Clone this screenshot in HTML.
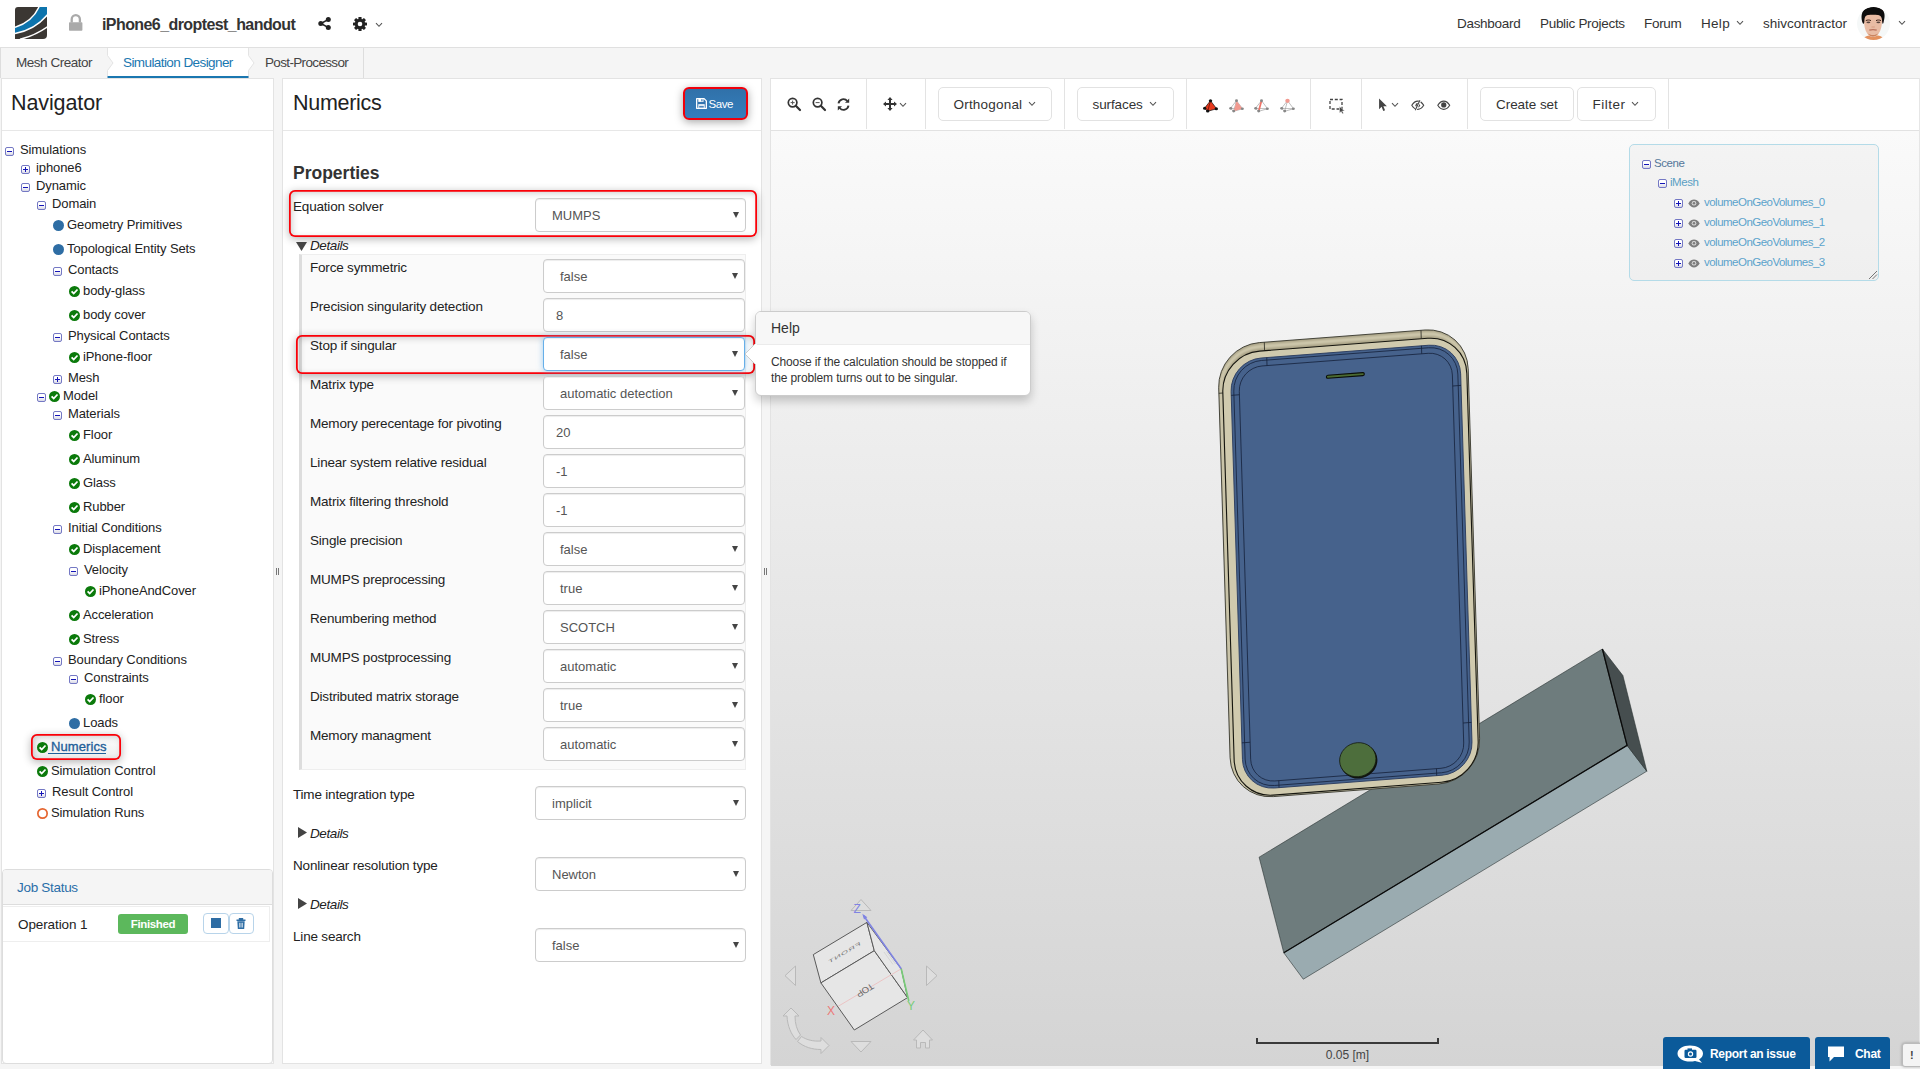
<!DOCTYPE html>
<html lang="en">
<head>
<meta charset="utf-8">
<title>iPhone6_droptest_handout - Simulation Designer</title>
<style>
*{box-sizing:border-box;margin:0;padding:0}
html,body{width:1920px;height:1069px;overflow:hidden}
body{background:#f5f5f5;font-family:"Liberation Sans",Arial,sans-serif;font-size:13.5px;letter-spacing:-0.3px;color:#333;position:relative}
.abs{position:absolute}
.arial{letter-spacing:0}
/* header */
#hdr{position:absolute;left:0;top:0;width:1920px;height:48px;background:#fff;border-bottom:1px solid #e0e0e0}
#hdr .t{position:absolute;top:0;height:47px;line-height:47px;white-space:nowrap;color:#333}
#title{left:102px;font-size:16px;font-weight:bold;color:#222;letter-spacing:-0.58px;top:1px !important}
/* tabs */
#tabs{position:absolute;left:0;top:48px;width:1920px;height:30px;background:#f5f5f5}
#tabs .tab{position:absolute;top:0;height:30px;line-height:30px;font-size:13.5px;letter-spacing:-0.47px;white-space:nowrap;color:#444}
/* panels */
.panel{position:absolute;background:#fff;border:1px solid #e3e3e3}
.ptitle{position:absolute;font-size:21.5px;letter-spacing:-0.3px;color:#222;white-space:nowrap;line-height:24px}
/* tree */
.tr{position:absolute;height:18px;line-height:18px;white-space:nowrap;color:#222;font-size:13px;letter-spacing:-0.1px}
.exp{position:absolute;width:9px;height:9px;border:1px solid #7478c4;border-radius:2px;background:linear-gradient(#fff 40%,#d9d9e6)}
.exp:before{content:"";position:absolute;left:1px;top:3px;width:5px;height:1px;background:#1414b8}
.exp.plus:after{content:"";position:absolute;left:3px;top:1px;width:1px;height:5px;background:#1414b8}
.dot{position:absolute;width:11px;height:11px;border-radius:50%;background:#2e6da4}
.ring{position:absolute;width:11px;height:11px;border-radius:50%;border:1.7px solid #e5652f;background:#fff}
.chk{position:absolute;width:11px;height:11px}
/* form */
.lbl{position:absolute;white-space:nowrap;height:18px;line-height:18px;color:#222;letter-spacing:-0.19px}
.sel,.inp{position:absolute;height:34px;border:1px solid #ccc;border-radius:4px;background:#fff;box-shadow:inset 0 1px 1px rgba(0,0,0,.075);font-size:13px;letter-spacing:0;color:#555;line-height:33px;white-space:nowrap}
.sel{padding-left:16px}
.inp{padding-left:12px}
.sel:after{content:"";position:absolute;right:6px;top:13px;border-left:3.5px solid transparent;border-right:3.5px solid transparent;border-top:6px solid #444}
.redbox{position:absolute;border-radius:6px;box-shadow:inset 0 0 0 1.75px #fb0008,inset 2px 2px 7px 1px rgba(0,0,0,.2),0 2px 8px rgba(0,0,0,.3)}
.det{position:absolute;font-style:italic;white-space:nowrap;height:18px;line-height:18px;color:#222;letter-spacing:-0.4px}
/* toolbar */
.vsep{position:absolute;top:79px;width:1px;height:50px;background:#e3e3e3}
.tbtn{position:absolute;top:87px;height:34px;border:1px solid #e2e2e2;border-radius:5px;background:#fff;line-height:33px;white-space:nowrap;color:#333;letter-spacing:-0.1px;font-size:13.5px}
.chev{display:inline-block;width:6px;height:6px;border-right:1.3px solid #555;border-bottom:1.3px solid #555;transform:rotate(45deg) scale(.8)}
svg{position:absolute;overflow:visible}
</style>
</head>
<body>
<!-- ===== header ===== -->
<div id="hdr">
 <svg style="left:15px;top:7px" width="32" height="32" viewBox="0 0 32 32">
  <defs><clipPath id="lgc"><path d="M3 0H32V28a4 4 0 0 1-4 4H0V3A3 3 0 0 1 3 0Z"/></clipPath></defs>
  <g clip-path="url(#lgc)">
   <rect width="32" height="32" fill="#3b3733"/>
   <path d="M0 20.400C9 17.500 19 11 24 0H33V7.300C24 18 12 24.500 0 26.500Z" fill="#0d74ad"/>
   <path d="M0 20.400C9 17.500 19 11 24 0" fill="none" stroke="#fff" stroke-width="1.500"/>
   <path d="M0 26.500C12 24.500 24 18 32.500 7.800" fill="none" stroke="#fff" stroke-width="1.600"/>
   <path d="M5 32.300C16 29.500 25 25 32.500 19.700" fill="none" stroke="#fff" stroke-width="1.500"/>
  </g>
 </svg>
 <svg style="left:68px;top:13px" width="16" height="18" viewBox="0 0 16 18">
  <path d="M3.700 9.500V6.200a4.100 4.100 0 0 1 8.200 0V9.500" fill="none" stroke="#aaa" stroke-width="2.300"/>
  <rect x="1" y="9.200" width="13.400" height="8.600" rx=".8" fill="#aaa"/>
 </svg>
 <div class="t" id="title">iPhone6_droptest_handout</div>
 <svg style="left:318px;top:17px" width="13" height="13" viewBox="0 0 13 13">
  <path d="M3 6.5L10 2.6M3 6.5L10 10.4" stroke="#222" stroke-width="1.5" fill="none"/>
  <circle cx="2.8" cy="6.5" r="2.5" fill="#222"/><circle cx="10.3" cy="2.6" r="2.5" fill="#222"/><circle cx="10.3" cy="10.4" r="2.5" fill="#222"/>
 </svg>
 <svg style="left:353px;top:17px" width="14" height="14" viewBox="-7 -7 14 14">
  <g fill="#222">
   <rect x="-1.6" y="-7" width="3.2" height="14" rx=".6"/>
   <rect x="-1.6" y="-7" width="3.2" height="14" rx=".6" transform="rotate(45)"/>
   <rect x="-1.6" y="-7" width="3.2" height="14" rx=".6" transform="rotate(90)"/>
   <rect x="-1.6" y="-7" width="3.2" height="14" rx=".6" transform="rotate(135)"/>
   <circle r="5.2"/>
  </g>
  <circle r="2.3" fill="#fff"/>
 </svg>
 <svg style="left:375px;top:22px" width="8" height="6" viewBox="0 0 8 6"><path d="M1 1.2L4 4.3L7 1.2" fill="none" stroke="#555" stroke-width="1.1"/></svg>

 <div class="t" style="left:1457px">Dashboard</div>
 <div class="t" style="left:1540px">Public Projects</div>
 <div class="t" style="left:1644px">Forum</div>
 <div class="t" style="left:1701px;letter-spacing:.3px">Help</div>
 <svg style="left:1736px;top:20px" width="8" height="6" viewBox="0 0 8 6"><path d="M1 1.2L4 4.3L7 1.2" fill="none" stroke="#555" stroke-width="1.1"/></svg>
 <div class="t" style="left:1763px;letter-spacing:0">shivcontractor</div>
 <svg style="left:1857px;top:7px" width="33" height="33" viewBox="0 0 33 33">
  <defs><clipPath id="avc"><circle cx="16.500" cy="16.500" r="16.500"/></clipPath><filter id="avb" x="-10%" y="-10%" width="120%" height="120%"><feGaussianBlur stdDeviation=".45"/></filter></defs>
  <g clip-path="url(#avc)">
   <rect width="33" height="33" fill="#f5f8f8"/>
   <g filter="url(#avb)">
    <path d="M5 34C6 30 9.500 29 12 28.500H21C24 29 26.500 30 27 34Z" fill="#e4925f"/>
    <path d="M7 13C7 9 10 6.500 16 6.500S25 9 25 13C25 21 23 25 21 27.500C19.500 29.500 18 30 16 30S12.500 29.500 11 27.500C9 25 7 21 7 13Z" fill="#e9bca4"/>
    <path d="M10.500 26C12 28.500 14 29.500 16 29.500S20 28.500 21.500 26C20 27.500 18 28 16 28S12 27.500 10.500 26Z" fill="#c8835e"/>
    <path d="M5.500 15.500C3.500 9 4 0 16 0S29 7 26.500 15.500C26 17 25.500 17.500 25.200 15C25 10.500 24 8.500 21 8C18 7.500 14 7.500 11 8C8 8.500 7.500 10.500 7.300 15C7 17.500 6 17 5.500 15.500Z" fill="#0b0808"/>
    <path d="M8.800 13.600C10.500 12.800 12.500 12.800 14 13.600M19 13.600C20.500 12.800 22.500 12.800 24 13.600" stroke="#3a2018" stroke-width="1" fill="none"/>
    <ellipse cx="11.400" cy="15.300" rx="2" ry=".9" fill="#5a4640"/><ellipse cx="21.400" cy="15.300" rx="2" ry=".9" fill="#5a4640"/>
    <path d="M12.300 23.200C14.500 22.500 17.500 22.500 19.700 23.200" stroke="#b8705a" stroke-width="1.300" fill="none"/>
    <path d="M14.500 20H17.800" stroke="#d59a80" stroke-width=".9"/>
   </g>
  </g>
 </svg>
 <svg style="left:1898px;top:20px" width="8" height="6" viewBox="0 0 8 6"><path d="M1 1.2L4 4.3L7 1.2" fill="none" stroke="#555" stroke-width="1.1"/></svg>
</div>

<!-- ===== tabs ===== -->
<div id="tabs">
 <div class="abs" style="left:0;top:0;width:1px;height:30px;background:#ddd"></div>
 <div class="abs" style="left:107px;top:0;width:141px;height:30px;background:#fff;border-bottom:2px solid #1a77b0"></div>
 <svg style="left:106px;top:0" width="10" height="30" viewBox="0 0 10 30"><path d="M0 0H1.500V7.500L7 15L1.500 22.500V30H0Z" fill="#f5f5f5"/><path d="M1.500 0V7.500L7 15L1.500 22.500V28" fill="none" stroke="#e4e4e4" stroke-width="1"/></svg>
 <svg style="left:247px;top:0" width="10" height="30" viewBox="0 0 10 30"><path d="M0 0H1.500V7.500L7 15L1.500 22.500V28H0Z" fill="#fff"/><path d="M1.500 0V7.500L7 15L1.500 22.500V30" fill="none" stroke="#e4e4e4" stroke-width="1"/><rect x="0" y="28" width="1.500" height="2" fill="#1a77b0"/></svg>
 <div class="tab" style="left:16px">Mesh Creator</div>
 <div class="tab" style="left:123px;color:#1a77b0;letter-spacing:-0.58px">Simulation Designer</div>
 <div class="tab" style="left:265px;letter-spacing:-0.65px">Post-Processor</div>
 <div class="abs" style="left:363px;top:0;width:1px;height:30px;background:#ddd"></div>
</div>
<!-- ===== navigator panel ===== -->
<div class="panel" style="left:1px;top:78px;width:273px;height:986px"></div>
<div class="abs" style="left:2px;top:130px;width:271px;height:1px;background:#e7e7e7"></div>
<div class="ptitle" style="left:11px;top:91px;letter-spacing:-0.1px">Navigator</div>
<div class="redbox" style="left:31px;top:734px;width:90px;height:26px;border-radius:6px;background:linear-gradient(#fff,#ececec)"></div>
<div class="exp" style="left:5px;top:147px"></div>
<div class="tr" style="left:20px;top:141px">Simulations</div>
<div class="exp plus" style="left:21px;top:165px"></div>
<div class="tr" style="left:36px;top:159px">iphone6</div>
<div class="exp" style="left:21px;top:183px"></div>
<div class="tr" style="left:36px;top:177px">Dynamic</div>
<div class="exp" style="left:37px;top:201px"></div>
<div class="tr" style="left:52px;top:195px">Domain</div>
<div class="dot" style="left:53px;top:220px"></div>
<div class="tr" style="left:67px;top:216px">Geometry Primitives</div>
<div class="dot" style="left:53px;top:244px"></div>
<div class="tr" style="left:67px;top:240px">Topological Entity Sets</div>
<div class="exp" style="left:53px;top:267px"></div>
<div class="tr" style="left:68px;top:261px">Contacts</div>
<svg class="chk" style="left:69px;top:286px" width="11" height="11" viewBox="0 0 11 11"><circle cx="5.5" cy="5.5" r="5.5" fill="#0b7a0b"/><path d="M2.6 5.400L4.700 7.500L8.500 3.500" fill="none" stroke="#fff" stroke-width="1.800"/></svg>
<div class="tr" style="left:83px;top:282px">body-glass</div>
<svg class="chk" style="left:69px;top:310px" width="11" height="11" viewBox="0 0 11 11"><circle cx="5.5" cy="5.5" r="5.5" fill="#0b7a0b"/><path d="M2.6 5.400L4.700 7.500L8.500 3.500" fill="none" stroke="#fff" stroke-width="1.800"/></svg>
<div class="tr" style="left:83px;top:306px">body cover</div>
<div class="exp" style="left:53px;top:333px"></div>
<div class="tr" style="left:68px;top:327px">Physical Contacts</div>
<svg class="chk" style="left:69px;top:352px" width="11" height="11" viewBox="0 0 11 11"><circle cx="5.5" cy="5.5" r="5.5" fill="#0b7a0b"/><path d="M2.6 5.400L4.700 7.500L8.500 3.500" fill="none" stroke="#fff" stroke-width="1.800"/></svg>
<div class="tr" style="left:83px;top:348px">iPhone-floor</div>
<div class="exp plus" style="left:53px;top:375px"></div>
<div class="tr" style="left:68px;top:369px">Mesh</div>
<div class="exp" style="left:37px;top:393px"></div>
<svg class="chk" style="left:49px;top:391px" width="11" height="11" viewBox="0 0 11 11"><circle cx="5.5" cy="5.5" r="5.5" fill="#0b7a0b"/><path d="M2.6 5.400L4.700 7.500L8.500 3.500" fill="none" stroke="#fff" stroke-width="1.800"/></svg>
<div class="tr" style="left:63px;top:387px">Model</div>
<div class="exp" style="left:53px;top:411px"></div>
<div class="tr" style="left:68px;top:405px">Materials</div>
<svg class="chk" style="left:69px;top:430px" width="11" height="11" viewBox="0 0 11 11"><circle cx="5.5" cy="5.5" r="5.5" fill="#0b7a0b"/><path d="M2.6 5.400L4.700 7.500L8.500 3.500" fill="none" stroke="#fff" stroke-width="1.800"/></svg>
<div class="tr" style="left:83px;top:426px">Floor</div>
<svg class="chk" style="left:69px;top:454px" width="11" height="11" viewBox="0 0 11 11"><circle cx="5.5" cy="5.5" r="5.5" fill="#0b7a0b"/><path d="M2.6 5.400L4.700 7.500L8.500 3.500" fill="none" stroke="#fff" stroke-width="1.800"/></svg>
<div class="tr" style="left:83px;top:450px">Aluminum</div>
<svg class="chk" style="left:69px;top:478px" width="11" height="11" viewBox="0 0 11 11"><circle cx="5.5" cy="5.5" r="5.5" fill="#0b7a0b"/><path d="M2.6 5.400L4.700 7.500L8.500 3.500" fill="none" stroke="#fff" stroke-width="1.800"/></svg>
<div class="tr" style="left:83px;top:474px">Glass</div>
<svg class="chk" style="left:69px;top:502px" width="11" height="11" viewBox="0 0 11 11"><circle cx="5.5" cy="5.5" r="5.5" fill="#0b7a0b"/><path d="M2.6 5.400L4.700 7.500L8.500 3.500" fill="none" stroke="#fff" stroke-width="1.800"/></svg>
<div class="tr" style="left:83px;top:498px">Rubber</div>
<div class="exp" style="left:53px;top:525px"></div>
<div class="tr" style="left:68px;top:519px">Initial Conditions</div>
<svg class="chk" style="left:69px;top:544px" width="11" height="11" viewBox="0 0 11 11"><circle cx="5.5" cy="5.5" r="5.5" fill="#0b7a0b"/><path d="M2.6 5.400L4.700 7.500L8.500 3.500" fill="none" stroke="#fff" stroke-width="1.800"/></svg>
<div class="tr" style="left:83px;top:540px">Displacement</div>
<div class="exp" style="left:69px;top:567px"></div>
<div class="tr" style="left:84px;top:561px">Velocity</div>
<svg class="chk" style="left:85px;top:586px" width="11" height="11" viewBox="0 0 11 11"><circle cx="5.5" cy="5.5" r="5.5" fill="#0b7a0b"/><path d="M2.6 5.400L4.700 7.500L8.500 3.500" fill="none" stroke="#fff" stroke-width="1.800"/></svg>
<div class="tr" style="left:99px;top:582px">iPhoneAndCover</div>
<svg class="chk" style="left:69px;top:610px" width="11" height="11" viewBox="0 0 11 11"><circle cx="5.5" cy="5.5" r="5.5" fill="#0b7a0b"/><path d="M2.6 5.400L4.700 7.500L8.500 3.500" fill="none" stroke="#fff" stroke-width="1.800"/></svg>
<div class="tr" style="left:83px;top:606px">Acceleration</div>
<svg class="chk" style="left:69px;top:634px" width="11" height="11" viewBox="0 0 11 11"><circle cx="5.5" cy="5.5" r="5.5" fill="#0b7a0b"/><path d="M2.6 5.400L4.700 7.500L8.500 3.500" fill="none" stroke="#fff" stroke-width="1.800"/></svg>
<div class="tr" style="left:83px;top:630px">Stress</div>
<div class="exp" style="left:53px;top:657px"></div>
<div class="tr" style="left:68px;top:651px">Boundary Conditions</div>
<div class="exp" style="left:69px;top:675px"></div>
<div class="tr" style="left:84px;top:669px">Constraints</div>
<svg class="chk" style="left:85px;top:694px" width="11" height="11" viewBox="0 0 11 11"><circle cx="5.5" cy="5.5" r="5.5" fill="#0b7a0b"/><path d="M2.6 5.400L4.700 7.500L8.500 3.500" fill="none" stroke="#fff" stroke-width="1.800"/></svg>
<div class="tr" style="left:99px;top:690px">floor</div>
<div class="dot" style="left:69px;top:718px"></div>
<div class="tr" style="left:83px;top:714px">Loads</div>
<svg class="chk" style="left:37px;top:742px" width="11" height="11" viewBox="0 0 11 11"><circle cx="5.5" cy="5.5" r="5.5" fill="#0b7a0b"/><path d="M2.6 5.400L4.700 7.500L8.500 3.500" fill="none" stroke="#fff" stroke-width="1.800"/></svg>
<div class="abs" style="left:48px;top:753px;width:58px;height:1px;background:#1f5f99"></div>
<div class="tr" style="left:51px;top:738px;color:#1f5f99;-webkit-text-stroke:.35px #1f5f99;letter-spacing:.1px">Numerics</div>
<svg class="chk" style="left:37px;top:766px" width="11" height="11" viewBox="0 0 11 11"><circle cx="5.5" cy="5.5" r="5.5" fill="#0b7a0b"/><path d="M2.6 5.400L4.700 7.500L8.500 3.500" fill="none" stroke="#fff" stroke-width="1.800"/></svg>
<div class="tr" style="left:51px;top:762px">Simulation Control</div>
<div class="exp plus" style="left:37px;top:789px"></div>
<div class="tr" style="left:52px;top:783px">Result Control</div>
<svg style="left:37px;top:808px" width="11" height="11" viewBox="0 0 11 11"><circle cx="5.500" cy="5.500" r="4.650" fill="#fff" stroke="#e5652f" stroke-width="1.700"/></svg>
<div class="tr" style="left:51px;top:804px">Simulation Runs</div>
<div class="abs" style="left:276px;top:568px;width:1px;height:7px;background:#777"></div><div class="abs" style="left:278px;top:568px;width:1px;height:7px;background:#777"></div>
<div class="abs" style="left:764px;top:568px;width:1px;height:7px;background:#777"></div><div class="abs" style="left:766px;top:568px;width:1px;height:7px;background:#777"></div>
<!-- job status -->
<div class="abs" style="left:2px;top:869px;width:271px;height:195px;border:1px solid #ddd;border-radius:4px;background:#fff"></div>
<div class="abs" style="left:3px;top:870px;width:269px;height:35px;background:#f5f5f5;border-bottom:1px solid #ddd;border-radius:3px 3px 0 0"></div>
<div class="abs" style="left:17px;top:879px;height:18px;line-height:18px;color:#2a6ea8;white-space:nowrap">Job Status</div>
<div class="abs" style="left:3px;top:906px;width:267px;height:36px;border:1px solid #eee;border-left:0"></div>
<div class="abs" style="left:18px;top:916px;height:18px;line-height:18px;white-space:nowrap;color:#222;letter-spacing:-0.1px">Operation 1</div>
<div class="abs" style="left:118px;top:914px;width:70px;height:20px;border-radius:3px;background:#5cb85c;color:#fff;font-weight:bold;font-size:11.500px;letter-spacing:-0.35px;line-height:21px;text-align:center">Finished</div>
<div class="abs" style="left:203px;top:913px;width:26px;height:21px;border:1px solid #b8d4ea;border-radius:4px;background:#fff"></div>
<div class="abs" style="left:229px;top:913px;width:25px;height:21px;border:1px solid #b8d4ea;border-radius:4px;background:#fff"></div>
<div class="abs" style="left:211px;top:918px;width:10px;height:10px;background:#2e6da4"></div>
<svg style="left:236px;top:918px" width="10" height="11" viewBox="0 0 10 11"><path d="M0.500 2.200H9.500M3.500 2V0.700H6.500V2" stroke="#2e6da4" stroke-width="1.400" fill="none"/><path d="M1.300 3.300H8.700L8.200 11H1.800Z" fill="#2e6da4"/><path d="M3.600 4.800V9.500M5 4.800V9.500M6.400 4.800V9.500" stroke="#fff" stroke-width=".7"/></svg>

<!-- ===== center (Numerics) panel ===== -->
<div class="panel" style="left:282px;top:78px;width:480px;height:986px"></div>
<div class="abs" style="left:283px;top:130px;width:478px;height:1px;background:#e7e7e7"></div>
<div class="ptitle" style="left:293px;top:91px">Numerics</div>
<div class="abs" style="left:683px;top:87px;width:65px;height:33px;border:2px solid #f0000c;border-radius:6px;background:linear-gradient(#3071a9,#357ebd);box-shadow:0 2px 9px rgba(0,0,0,.35)"></div>
<svg style="left:696px;top:98px" width="11" height="11" viewBox="0 0 11 11"><path d="M.65 .65H8.100L10.350 2.900V10.350H.65Z" fill="#3174b0" stroke="#fff" stroke-width="1.300" stroke-linejoin="round"/><rect x="2.300" y=".8" width="5.200" height="3.100" fill="#fff"/><rect x="5.300" y="1.200" width="1.200" height="2.100" fill="#3174b0"/><rect x="2.300" y="6.200" width="6.400" height="4" fill="#fff"/><rect x="3.200" y="7.800" width="4.600" height="1.800" fill="#4a86bd"/></svg>
<div class="abs" style="left:708.500px;top:95px;height:18px;line-height:18px;color:#fff;font-size:11.500px;letter-spacing:-0.4px;white-space:nowrap">Save</div>
<div class="abs" style="left:293px;top:161px;height:24px;line-height:24px;font-size:17.500px;font-weight:bold;letter-spacing:0;color:#333;white-space:nowrap">Properties</div>
<div class="redbox" style="left:289px;top:190px;width:468px;height:47px"></div>
<div class="lbl" style="left:293px;top:198px">Equation solver</div>
<div class="sel" style="left:535px;top:198px;width:211px">MUMPS</div>
<svg style="left:296px;top:241.5px" width="11" height="9" viewBox="0 0 11 9"><path d="M0 0H11L5.500 9Z" fill="#444"/></svg>
<div class="det" style="left:310px;top:237px">Details</div>
<div class="abs" style="left:299px;top:254px;width:447px;height:516px;background:#fafafa;border:1px solid #eee;border-left:3px solid #ddd"></div>
<div class="lbl" style="left:310px;top:259px">Force symmetric</div>
<div class="sel" style="left:543px;top:259px;width:202px">false</div>
<div class="lbl" style="left:310px;top:298px">Precision singularity detection</div>
<div class="inp" style="left:543px;top:298px;width:202px">8</div>
<div class="redbox" style="left:296px;top:335px;width:459px;height:39px"></div>
<div class="lbl" style="left:310px;top:337px">Stop if singular</div>
<div class="sel" style="left:543px;top:337px;width:202px;border-color:#66afe9;box-shadow:inset 0 1px 1px rgba(0,0,0,.075),0 0 6px rgba(102,175,233,.6)">false</div>
<div class="lbl" style="left:310px;top:376px">Matrix type</div>
<div class="sel" style="left:543px;top:376px;width:202px">automatic detection</div>
<div class="lbl" style="left:310px;top:415px">Memory perecentage for pivoting</div>
<div class="inp" style="left:543px;top:415px;width:202px">20</div>
<div class="lbl" style="left:310px;top:454px">Linear system relative residual</div>
<div class="inp" style="left:543px;top:454px;width:202px">-1</div>
<div class="lbl" style="left:310px;top:493px">Matrix filtering threshold</div>
<div class="inp" style="left:543px;top:493px;width:202px">-1</div>
<div class="lbl" style="left:310px;top:532px">Single precision</div>
<div class="sel" style="left:543px;top:532px;width:202px">false</div>
<div class="lbl" style="left:310px;top:571px">MUMPS preprocessing</div>
<div class="sel" style="left:543px;top:571px;width:202px">true</div>
<div class="lbl" style="left:310px;top:610px">Renumbering method</div>
<div class="sel" style="left:543px;top:610px;width:202px">SCOTCH</div>
<div class="lbl" style="left:310px;top:649px">MUMPS postprocessing</div>
<div class="sel" style="left:543px;top:649px;width:202px">automatic</div>
<div class="lbl" style="left:310px;top:688px">Distributed matrix storage</div>
<div class="sel" style="left:543px;top:688px;width:202px">true</div>
<div class="lbl" style="left:310px;top:727px">Memory managment</div>
<div class="sel" style="left:543px;top:727px;width:202px">automatic</div>
<div class="lbl" style="left:293px;top:786px">Time integration type</div>
<div class="sel" style="left:535px;top:786px;width:211px">implicit</div>
<svg style="left:298px;top:827px" width="9" height="11" viewBox="0 0 9 11"><path d="M0 0V11L9 5.500Z" fill="#444"/></svg>
<div class="det" style="left:310px;top:825px">Details</div>
<div class="lbl" style="left:293px;top:857px">Nonlinear resolution type</div>
<div class="sel" style="left:535px;top:857px;width:211px">Newton</div>
<svg style="left:298px;top:898px" width="9" height="11" viewBox="0 0 9 11"><path d="M0 0V11L9 5.500Z" fill="#444"/></svg>
<div class="det" style="left:310px;top:896px">Details</div>
<div class="lbl" style="left:293px;top:928px">Line search</div>
<div class="sel" style="left:535px;top:928px;width:211px">false</div>
<!-- ===== viewer panel ===== -->
<div class="abs" style="left:770px;top:78px;width:1150px;height:987px;background:#fff;border:1px solid #e3e3e3;border-right:0;border-bottom:0"></div>
<div id="canvas" class="abs" style="left:771px;top:131px;width:1149px;height:934.500px;background:linear-gradient(#fafafa,#d4d4d4)"></div>
<div class="abs" style="left:771px;top:130px;width:1149px;height:1px;background:#e2e2e2"></div>
<div class="abs" style="left:1919px;top:78px;width:1px;height:988px;background:#e6e6e6"></div>
<!-- toolbar -->
<div class="vsep" style="left:866px"></div><div class="vsep" style="left:925px"></div><div class="vsep" style="left:1064px"></div><div class="vsep" style="left:1186px"></div>
<div class="vsep" style="left:1310px"></div><div class="vsep" style="left:1361px"></div><div class="vsep" style="left:1467px"></div><div class="vsep" style="left:1668px"></div>
<!-- zoom in / out / refresh -->
<svg style="left:787px;top:97px" width="14" height="14" viewBox="0 0 14 14"><circle cx="5.600" cy="5.600" r="4.300" fill="none" stroke="#333" stroke-width="1.700"/><path d="M8.800 8.800L13 13" stroke="#333" stroke-width="2.200" stroke-linecap="round"/><path d="M3.600 5.600H7.600M5.600 3.600V7.600" stroke="#555" stroke-width="1"/></svg>
<svg style="left:812px;top:97px" width="14" height="14" viewBox="0 0 14 14"><circle cx="5.600" cy="5.600" r="4.300" fill="none" stroke="#333" stroke-width="1.700"/><path d="M8.800 8.800L13 13" stroke="#333" stroke-width="2.200" stroke-linecap="round"/><path d="M3.600 5.600H7.600" stroke="#555" stroke-width="1"/></svg>
<svg style="left:837px;top:98px" width="13" height="13" viewBox="0 0 13 13"><path d="M1.500 5.300A5 5 0 0 1 10.300 3" fill="none" stroke="#333" stroke-width="1.900"/><path d="M12.200 .6V4.800H8Z" fill="#333"/><path d="M11.500 7.700A5 5 0 0 1 2.700 10" fill="none" stroke="#333" stroke-width="1.900"/><path d="M.8 12.400V8.200H5Z" fill="#333"/></svg>
<!-- move -->
<svg style="left:883px;top:97px" width="14" height="14" viewBox="0 0 14 14"><path d="M7 0L9.600 3H8V6H11V4.400L14 7L11 9.600V8H8V11H9.600L7 14L4.400 11H6V8H3V9.600L0 7L3 4.400V6H6V3H4.400Z" fill="#333"/></svg>
<svg style="left:899px;top:102px" width="8" height="6" viewBox="0 0 8 6"><path d="M1 1.200L4 4.300L7 1.200" fill="none" stroke="#555" stroke-width="1.100"/></svg>
<div class="tbtn" style="left:938px;width:114px;padding-left:14.500px;letter-spacing:.2px">Orthogonal</div>
<svg style="left:1028px;top:101px" width="8" height="6" viewBox="0 0 8 6"><path d="M1 1.200L4 4.300L7 1.200" fill="none" stroke="#555" stroke-width="1.100"/></svg>
<div class="tbtn" style="left:1077px;width:97px;padding-left:14.500px;letter-spacing:-0.1px">surfaces</div>
<svg style="left:1149px;top:101px" width="8" height="6" viewBox="0 0 8 6"><path d="M1 1.200L4 4.300L7 1.200" fill="none" stroke="#555" stroke-width="1.100"/></svg>
<!-- tetra icons -->
<svg style="left:1202.5px;top:98.500px" width="15" height="14" viewBox="0 0 16 16.500" preserveAspectRatio="none"><path d="M8 2L1.500 11L5 14.500L14.500 11.500Z" fill="#e83a1e" stroke="#111" stroke-width=".8"/><path d="M8 2L5 14.500" stroke="#7a1408" stroke-width="1"/><circle cx="8" cy="2" r="1.800" fill="#111"/><circle cx="1.800" cy="11" r="1.800" fill="#111"/><circle cx="5" cy="14.200" r="1.800" fill="#111"/><circle cx="14.200" cy="11.500" r="1.800" fill="#111"/></svg>
<svg style="left:1228.5px;top:98.500px" width="15" height="14" viewBox="0 0 16 16.500" preserveAspectRatio="none"><path d="M8 2L1.500 11L5 14.500L14.500 11.500ZM1.500 11L14.500 11.500M8 2L5 14.500" fill="none" stroke="#999" stroke-width=".7"/><path d="M8 2L5 14.500L14.500 11.500Z" fill="#f29a90"/><circle cx="8" cy="2" r="1.600" fill="#888"/><circle cx="1.800" cy="11" r="1.600" fill="#888"/><circle cx="5" cy="14.200" r="1.600" fill="#888"/><circle cx="14.200" cy="11.500" r="1.600" fill="#888"/></svg>
<svg style="left:1253.5px;top:98.500px" width="15" height="14" viewBox="0 0 16 16.500" preserveAspectRatio="none"><path d="M8 2L1.500 11L5 14.500L14.500 11.500ZM1.500 11L14.500 11.500" fill="none" stroke="#999" stroke-width=".7"/><path d="M8 2L5 14.500" stroke="#ee7468" stroke-width="1.800"/><circle cx="8" cy="2" r="1.600" fill="#888"/><circle cx="1.800" cy="11" r="1.600" fill="#888"/><circle cx="5" cy="14.200" r="1.600" fill="#888"/><circle cx="14.200" cy="11.500" r="1.600" fill="#888"/></svg>
<svg style="left:1279.5px;top:98.500px" width="15" height="14" viewBox="0 0 16 16.500" preserveAspectRatio="none"><path d="M8 2L1.500 11L5 14.500L14.500 11.500ZM1.500 11L14.500 11.500M8 2L5 14.500" fill="none" stroke="#999" stroke-width=".7"/><circle cx="8" cy="2.200" r="2.400" fill="#f29a90"/><circle cx="1.800" cy="11" r="1.600" fill="#888"/><circle cx="5" cy="14.200" r="1.600" fill="#888"/><circle cx="14.200" cy="11.500" r="1.600" fill="#888"/></svg>
<!-- box select -->
<svg style="left:1328.500px;top:97.500px" width="17" height="16" viewBox="0 0 17 16"><rect x="1" y="1.500" width="12" height="9.500" fill="none" stroke="#444" stroke-width="1.300" stroke-dasharray="3 1.800"/><path d="M10.500 8.500V15L12.200 13.400L13.300 15.800L14.500 15.200L13.400 12.900H15.600Z" fill="#444" stroke="#fff" stroke-width=".4"/></svg>
<!-- cursor, eyes -->
<svg style="left:1378px;top:97.500px" width="10" height="14" viewBox="0 0 10 15"><path d="M.8 .5V12L3.500 9.500L5.300 13.800L7.200 13L5.400 8.800H9.200Z" fill="#444"/></svg>
<svg style="left:1391px;top:102px" width="8" height="6" viewBox="0 0 8 6"><path d="M1 1.200L4 4.300L7 1.200" fill="none" stroke="#555" stroke-width="1.100"/></svg>
<svg style="left:1411px;top:99.500px" width="13.500" height="10.500" viewBox="0 0 15 12"><path d="M.7 6C3 2.300 5.300 1.300 7.500 1.300S12 2.300 14.300 6C12 9.700 9.700 10.700 7.500 10.700S3 9.700 .7 6Z" fill="none" stroke="#444" stroke-width="1.300"/><circle cx="7.500" cy="6" r="2.600" fill="#444"/><path d="M10.500 .3L5 11.700" stroke="#fff" stroke-width="2.200"/><path d="M10 .3L4.600 11.700" stroke="#444" stroke-width="1.200"/></svg>
<svg style="left:1437px;top:99.500px" width="13.500" height="10.500" viewBox="0 0 15 12"><path d="M.7 6C3 2.300 5.300 1.300 7.500 1.300S12 2.300 14.300 6C12 9.700 9.700 10.700 7.500 10.700S3 9.700 .7 6Z" fill="none" stroke="#444" stroke-width="1.300"/><circle cx="7.500" cy="5.600" r="3" fill="#444"/></svg>
<div class="tbtn" style="left:1480px;width:94px;padding-left:15px;letter-spacing:-0.05px">Create set</div>
<div class="tbtn" style="left:1577px;width:79px;padding-left:14.500px;letter-spacing:.5px">Filter</div>
<svg style="left:1631px;top:101px" width="8" height="6" viewBox="0 0 8 6"><path d="M1 1.200L4 4.300L7 1.200" fill="none" stroke="#555" stroke-width="1.100"/></svg>
<!-- ===== 3D scene ===== -->
<svg style="left:0;top:0" width="1920" height="1069" viewBox="0 0 1920 1069">
 <!-- floor block -->
 <g stroke="#2a3232" stroke-width=".6" stroke-linejoin="round">
  <path d="M1259.100 857.200L1602.400 649L1627.100 745.400L1283.800 952.800Z" fill="#6e7c7d"/>
  <path d="M1283.800 952.800L1627.100 745.400L1646.800 771.200L1303.300 979.200Z" fill="#9aabb0"/>
  <path d="M1602.400 649L1622.900 675.600L1646.800 771.200L1627.100 745.400Z" fill="#464e4f"/>
  <path d="M1283.800 952.800L1627.100 745.400L1602.400 649" fill="none" stroke="#0a0a0a" stroke-width="1.300"/>
 </g>
 <!-- phone -->
 <g transform="matrix(0.998 -0.076 0.0308 1 1217.400 345.800)">
  <defs><filter id="phb" x="-5%" y="-5%" width="110%" height="110%"><feGaussianBlur stdDeviation="1"/></filter><clipPath id="phc"><rect x="0" y="0" width="250" height="454" rx="42" ry="42"/></clipPath></defs>
  <rect x="0" y="0" width="250" height="454" rx="42" ry="42" fill="#a9a286"/>
  <g clip-path="url(#phc)"><rect x="2" y="4" width="247" height="449" rx="40" ry="40" fill="none" stroke="#d2ccb0" stroke-width="3.400" filter="url(#phb)"/></g>
  <rect x="0" y="0" width="250" height="454" rx="42" ry="42" fill="none" stroke="#3a3a30" stroke-width=".9"/>
  <path d="M47 0V8.500M0 47.500H4.500M204 0V8.500" stroke="#2a2a22" stroke-width=".8"/>
  <rect x="4" y="8.500" width="244.500" height="444" rx="38" ry="38" fill="#d0caae" stroke="#15150f" stroke-width="1.100"/>
  <rect x="12.300" y="15.500" width="230" height="430" rx="31" ry="31" fill="#46628c" stroke="#2a3c5e" stroke-width=".9"/>
  <rect x="15" y="18" width="224.500" height="425" rx="28.500" ry="28.500" fill="none" stroke="#16223c" stroke-width=".8"/>
  <rect x="20.500" y="23.500" width="213.500" height="415" rx="23.500" ry="23.500" fill="none" stroke="#16223c" stroke-width=".8"/>
  <path d="M49 15.500V23.500M12.300 50.500H20.500M204 15.500V23.500M234 58H242.300M234 395H242.300M20.500 398H12.300M48 438.500V445.500M206 438.500V445.500" stroke="#16223c" stroke-width=".8"/>
  <rect x="108" y="37.800" width="38" height="3" rx="1.500" fill="#4a6a32" stroke="#0a0e08" stroke-width="1.100"/>
  <ellipse cx="128.600" cy="425" rx="18.600" ry="17.400" fill="#10140e"/>
  <ellipse cx="127.600" cy="423.600" rx="18.200" ry="17" fill="#4d6e3c" stroke="#141a10" stroke-width=".8"/>
 </g>
</svg>
<!-- scene tree box -->
<div class="abs" style="left:1629px;top:144px;width:250px;height:137px;border:1px solid #b4dbe8;border-radius:5px;background:rgba(225,225,225,.22)"></div>
<svg style="left:1869px;top:271px" width="8" height="8" viewBox="0 0 8 8"><path d="M0 8L8 0M3.500 8L8 3.500" stroke="#555" stroke-width=".8"/></svg>
<div class="exp" style="left:1642px;top:160px"></div>
<div class="abs" style="left:1654px;top:155px;height:16px;line-height:16px;font-size:11.500px;letter-spacing:-0.45px;color:#55779a;white-space:nowrap">Scene</div>
<div class="exp" style="left:1658px;top:179px"></div>
<div class="abs" style="left:1670px;top:174px;height:16px;line-height:16px;font-size:11.500px;letter-spacing:-0.45px;color:#5b9fc4;white-space:nowrap">iMesh</div>
<div class="exp plus" style="left:1674px;top:199px"></div>
<svg style="left:1688px;top:199px" width="12" height="9" viewBox="0 0 12 9"><path d="M.3 4.500C2 1.600 4 .6 6 .6s4 1 5.700 3.900C10 7.400 8 8.400 6 8.400S2 7.400 .3 4.500Z" fill="#7d7d7d"/><circle cx="6" cy="4.300" r="2.300" fill="#ddd"/><circle cx="6" cy="4.300" r="1.300" fill="#7d7d7d"/></svg>
<div class="abs" style="left:1704px;top:194px;height:16px;line-height:16px;font-size:11.500px;letter-spacing:-0.52px;color:#5ba3cc;white-space:nowrap">volumeOnGeoVolumes_0</div>
<div class="exp plus" style="left:1674px;top:219px"></div>
<svg style="left:1688px;top:219px" width="12" height="9" viewBox="0 0 12 9"><path d="M.3 4.500C2 1.600 4 .6 6 .6s4 1 5.700 3.900C10 7.400 8 8.400 6 8.400S2 7.400 .3 4.500Z" fill="#7d7d7d"/><circle cx="6" cy="4.300" r="2.300" fill="#ddd"/><circle cx="6" cy="4.300" r="1.300" fill="#7d7d7d"/></svg>
<div class="abs" style="left:1704px;top:214px;height:16px;line-height:16px;font-size:11.500px;letter-spacing:-0.52px;color:#5ba3cc;white-space:nowrap">volumeOnGeoVolumes_1</div>
<div class="exp plus" style="left:1674px;top:239px"></div>
<svg style="left:1688px;top:239px" width="12" height="9" viewBox="0 0 12 9"><path d="M.3 4.500C2 1.600 4 .6 6 .6s4 1 5.700 3.900C10 7.400 8 8.400 6 8.400S2 7.400 .3 4.500Z" fill="#7d7d7d"/><circle cx="6" cy="4.300" r="2.300" fill="#ddd"/><circle cx="6" cy="4.300" r="1.300" fill="#7d7d7d"/></svg>
<div class="abs" style="left:1704px;top:234px;height:16px;line-height:16px;font-size:11.500px;letter-spacing:-0.52px;color:#5ba3cc;white-space:nowrap">volumeOnGeoVolumes_2</div>
<div class="exp plus" style="left:1674px;top:259px"></div>
<svg style="left:1688px;top:259px" width="12" height="9" viewBox="0 0 12 9"><path d="M.3 4.500C2 1.600 4 .6 6 .6s4 1 5.700 3.900C10 7.400 8 8.400 6 8.400S2 7.400 .3 4.500Z" fill="#7d7d7d"/><circle cx="6" cy="4.300" r="2.300" fill="#ddd"/><circle cx="6" cy="4.300" r="1.300" fill="#7d7d7d"/></svg>
<div class="abs" style="left:1704px;top:254px;height:16px;line-height:16px;font-size:11.500px;letter-spacing:-0.52px;color:#5ba3cc;white-space:nowrap">volumeOnGeoVolumes_3</div>
<!-- nav cube -->
<svg style="left:0;top:0" width="1920" height="1069" viewBox="0 0 1920 1069">
 <g fill="#dedede" stroke="#b9b9b9" stroke-width="1" stroke-linejoin="round">
  <path d="M861 899.500L871 910.500H851Z"/>
  <path d="M861 1052L871 1041.500H851Z"/>
  <path d="M785 975.700L795.500 966V985.500Z"/>
  <path d="M937 975.700L926.500 966V985.500Z"/>
  <path d="M923 1030L932.500 1040H929.500V1048H925.500V1042.500H920.500V1048H916.500V1040H913.500Z"/>
  <path d="M791 1008L783 1016H787C787.500 1026 791 1034 796 1039.500L800.500 1035C797 1030 795 1024 795 1016H799Z"/>
  <path d="M829 1045.500L821 1037.500V1041C813 1041.500 807 1040 801.500 1036.500L797.500 1041.500C804 1047 812 1049.500 821 1049.500V1053.500Z"/>
 </g>
 <g fill="#e6e6e6" stroke="#5a5a5a" stroke-width="1" stroke-linejoin="round">
  <path d="M866.900 922.400L813.300 954.600L820.900 982.900L874.300 950.700Z"/>
  <path d="M874.300 950.700L820.900 982.900L854.300 1030L907.600 997.600Z"/>
  <path d="M866.900 922.400L874.300 950.700L907.600 997.600L901.200 968.800Z"/>
 </g>
 <path d="M901.200 968.800L838 1006.400" stroke="#ecc4c4" stroke-width="1"/>
 <path d="M901.200 968.800L863.500 915.500" stroke="#7f84e2" stroke-width="1.600"/>
 <path d="M862.300 913.800L867.300 917.300L864 919.500Z" fill="#7f84e2"/>
 <path d="M901.200 968.800L908.800 1001" stroke="#78cc78" stroke-width="1.600"/>
 <path d="M884 952L893 964.500M886.500 951.500L895.500 964" stroke="#cfcfcf" stroke-width=".7"/>
 <text x="853.500" y="912.500" font-family="Liberation Sans, sans-serif" font-size="12" fill="#7f84e2">Z</text>
 <text x="907" y="1010" font-family="Liberation Sans, sans-serif" font-size="12" fill="#78cc78">Y</text>
 <text x="827" y="1015" font-family="Liberation Sans, sans-serif" font-size="12" fill="#ec7878">X</text>
 <text transform="matrix(-0.857 0.515 0.118 0.453 844.200 952.800)" x="0" y="3.600" text-anchor="middle" font-family="Liberation Sans, sans-serif" font-size="10" fill="#777" letter-spacing=".6">FRONT</text>
 <text transform="matrix(-0.854 0.515 -0.533 -0.750 865.200 990.400)" x="0" y="3.400" text-anchor="middle" font-family="Liberation Sans, sans-serif" font-size="9.500" fill="#666">TOP</text>
</svg>
<!-- scale bar -->
<div class="abs" style="left:1256px;top:1038px;width:183px;height:6px;border:2px solid #3a3a3a;border-top:0"></div>
<div class="abs arial" style="left:1256px;top:1048px;width:183px;text-align:center;font-size:12px;line-height:14px;color:#444">0.05 [m]</div>
<!-- help popover -->
<div class="abs" style="left:755px;top:311px;width:276px;height:85px;border:1px solid #ccc;border-radius:6px;background:#fff;box-shadow:0 5px 10px rgba(0,0,0,.2)"></div>
<div class="abs" style="left:756px;top:312px;width:274px;height:33px;background:#f7f7f7;border-bottom:1px solid #ebebeb;border-radius:5px 5px 0 0"></div>
<svg style="left:744px;top:343px" width="12" height="22" viewBox="0 0 12 22"><path d="M12 0L1 11L12 22" fill="#fff" stroke="#ccc" stroke-width="1"/><rect x="11.300" y="1" width="1.500" height="20" fill="#fff"/></svg>
<div class="abs arial" style="left:771px;top:319px;font-size:14px;line-height:18px;color:#333;white-space:nowrap">Help</div>
<div class="abs arial" style="left:771px;top:354px;font-size:12px;line-height:16px;color:#333;white-space:nowrap;letter-spacing:-0.13px">Choose if the calculation should be stopped if<br>the problem turns out to be singular.</div>
<!-- bottom buttons -->
<div class="abs" style="left:1663px;top:1037px;width:147px;height:32px;background:#0b5a9a;border-radius:3px 3px 0 0"></div>
<svg style="left:1677px;top:1045px" width="28" height="18" viewBox="0 0 28 18"><path d="M13 .5C20 .5 26 3.800 26 8.500C26 11 24.500 13 22 14.500L25 17.800L18 16C16.500 16.400 14.800 16.600 13 16.600C6 16.600 .5 13 .5 8.500S6 .5 13 .5Z" fill="#fff"/><rect x="7.500" y="4.800" width="12" height="8.200" rx="1.200" fill="#0b5a9a"/><rect x="10.500" y="3.400" width="4.500" height="2" fill="#0b5a9a"/><circle cx="13.500" cy="9" r="2.700" fill="#fff"/><circle cx="13.500" cy="9" r="1.500" fill="#0b5a9a"/></svg>
<div class="abs arial" style="left:1710px;top:1046px;font-size:12px;line-height:16px;font-weight:bold;letter-spacing:-0.3px;color:#fff;white-space:nowrap">Report an issue</div>
<div class="abs" style="left:1815px;top:1037px;width:75px;height:32px;background:#0b5a9a;border-radius:3px 3px 0 0"></div>
<svg style="left:1827px;top:1046px" width="18" height="16" viewBox="0 0 18 16"><path d="M1 .5H17V11H7L2.500 15.500V11H1Z" fill="#fff"/></svg>
<div class="abs arial" style="left:1855px;top:1046px;font-size:12px;line-height:16px;font-weight:bold;letter-spacing:-0.3px;color:#fff;white-space:nowrap">Chat</div>
<div class="abs" style="left:1902px;top:1043px;width:20px;height:24px;background:#f4f4f4;border:1px solid #bbb;border-radius:3px 0 0 3px;box-shadow:0 0 3px rgba(0,0,0,.3)"></div>
<div class="abs arial" style="left:1910px;top:1048px;font-size:11px;line-height:14px;font-weight:bold;color:#444">!</div>
</body>
</html>
